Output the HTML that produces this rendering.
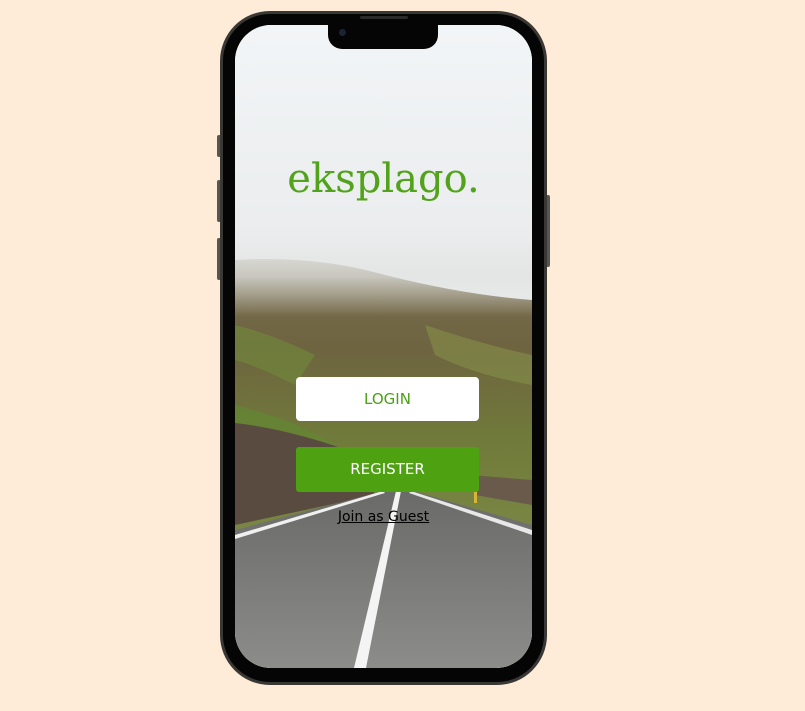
<!DOCTYPE html>
<html><head><meta charset="utf-8"><style>
html,body{margin:0;padding:0;width:805px;height:711px;background:#feecd9;overflow:hidden;font-family:"DejaVu Sans","Liberation Sans",sans-serif}
.abs{position:absolute}
</style></head><body>
<div class="abs" style="left:217px;top:135px;width:4px;height:22px;background:#555;border-radius:2px"></div>
<div class="abs" style="left:217px;top:180px;width:4px;height:42px;background:#555;border-radius:2px"></div>
<div class="abs" style="left:217px;top:238px;width:4px;height:42px;background:#555;border-radius:2px"></div>
<div class="abs" style="left:546px;top:195px;width:4px;height:72px;background:#555;border-radius:2px"></div>
<div class="abs" style="left:220px;top:11px;width:327px;height:674px;border-radius:50px;background:#3a3834"></div>
<div class="abs" style="left:223px;top:14px;width:321px;height:668px;border-radius:47px;background:#050505"></div>
<div class="abs" style="left:235px;top:25px;width:297px;height:643px;border-radius:36px;overflow:hidden;background:#eef1f3">
<svg width="297" height="643" viewBox="0 0 297 643" style="position:absolute;left:0;top:0">
<defs>
<linearGradient id="sky" x1="0" y1="0" x2="0" y2="1"><stop offset="0" stop-color="#f2f5f7"/><stop offset="0.34" stop-color="#eaeced"/><stop offset="1" stop-color="#eaeced"/></linearGradient>
<linearGradient id="mt" x1="0" y1="0" x2="0" y2="1"><stop offset="0" stop-color="#7b6e52"/><stop offset="0.3" stop-color="#6e6440"/><stop offset="0.6" stop-color="#707a3a"/><stop offset="1" stop-color="#7c8a46"/></linearGradient>
<linearGradient id="fog" x1="0" y1="0" x2="0" y2="1"><stop offset="0" stop-color="#eaeced" stop-opacity="1"/><stop offset="0.5" stop-color="#e2e4e2" stop-opacity="0.75"/><stop offset="1" stop-color="#e2e4e2" stop-opacity="0"/></linearGradient>
<linearGradient id="rd" x1="0" y1="0" x2="0" y2="1"><stop offset="0" stop-color="#6a6a68"/><stop offset="1" stop-color="#8c8c8a"/></linearGradient>
</defs>
<rect width="297" height="643" fill="url(#sky)"/>
<path d="M0 235 Q80 230 150 250 Q230 270 297 275 L297 530 L0 530Z" fill="url(#mt)"/>
<path d="M0 300 Q40 310 80 330 L60 360 Q20 340 0 335Z" fill="#6f8a3a" opacity="0.6"/>
<path d="M0 380 Q60 395 100 420 L60 430 Q20 410 0 405Z" fill="#5f8a30" opacity="0.6"/>
<path d="M190 300 Q250 320 297 330 L297 360 Q240 350 200 330Z" fill="#86904a" opacity="0.6"/>
<path d="M0 398 Q60 405 125 430 L140 470 L0 500Z" fill="#5a4b40"/>
<path d="M235 450 L297 455 L297 480 L240 470Z" fill="#6a5a4c"/>
<rect x="0" y="212" width="297" height="80" fill="url(#fog)"/>
<path d="M0 505 L148 466 L178 466 L297 500 L297 643 L0 643Z" fill="url(#rd)"/>
<path d="M0 510 L148 466 L150 468 L0 514Z" fill="#f0f0f0"/>
<path d="M176 466 L297 505 L297 510 L174 468Z" fill="#e8e8e8"/>
<path d="M161 466 L166 466 L131 643 L119 643Z" fill="#f4f4f4"/>
<rect x="239" y="462" width="3" height="16" fill="#d9b43a"/>
</svg>
<div class="abs" style="left:0;top:131px;width:297px;text-align:center;font-family:'DejaVu Serif',serif;font-size:40px;color:#52a31b">eksplago.</div>
<div class="abs" style="left:61px;top:352px;width:183px;height:44px;background:#fff;border-radius:4px;color:#4aa016;font-size:15px;text-align:center;line-height:44px">LOGIN</div>
<div class="abs" style="left:61px;top:422px;width:183px;height:45px;background:#4ea212;border-radius:3px;color:#fff;font-size:15px;text-align:center;line-height:45px">REGISTER</div>
<div class="abs" style="left:0;top:484px;width:297px;text-align:center;font-size:14px;color:#000;text-decoration:underline">Join as Guest</div>
</div>
<div class="abs" style="left:328px;top:22px;width:110px;height:27px;background:#050505;border-radius:0 0 14px 14px"></div>
<div class="abs" style="left:339px;top:29px;width:7px;height:7px;border-radius:50%;background:#1a2436"></div>
<div class="abs" style="left:360px;top:16px;width:48px;height:3px;background:#2a2a2a;border-radius:2px"></div>
</body></html>
